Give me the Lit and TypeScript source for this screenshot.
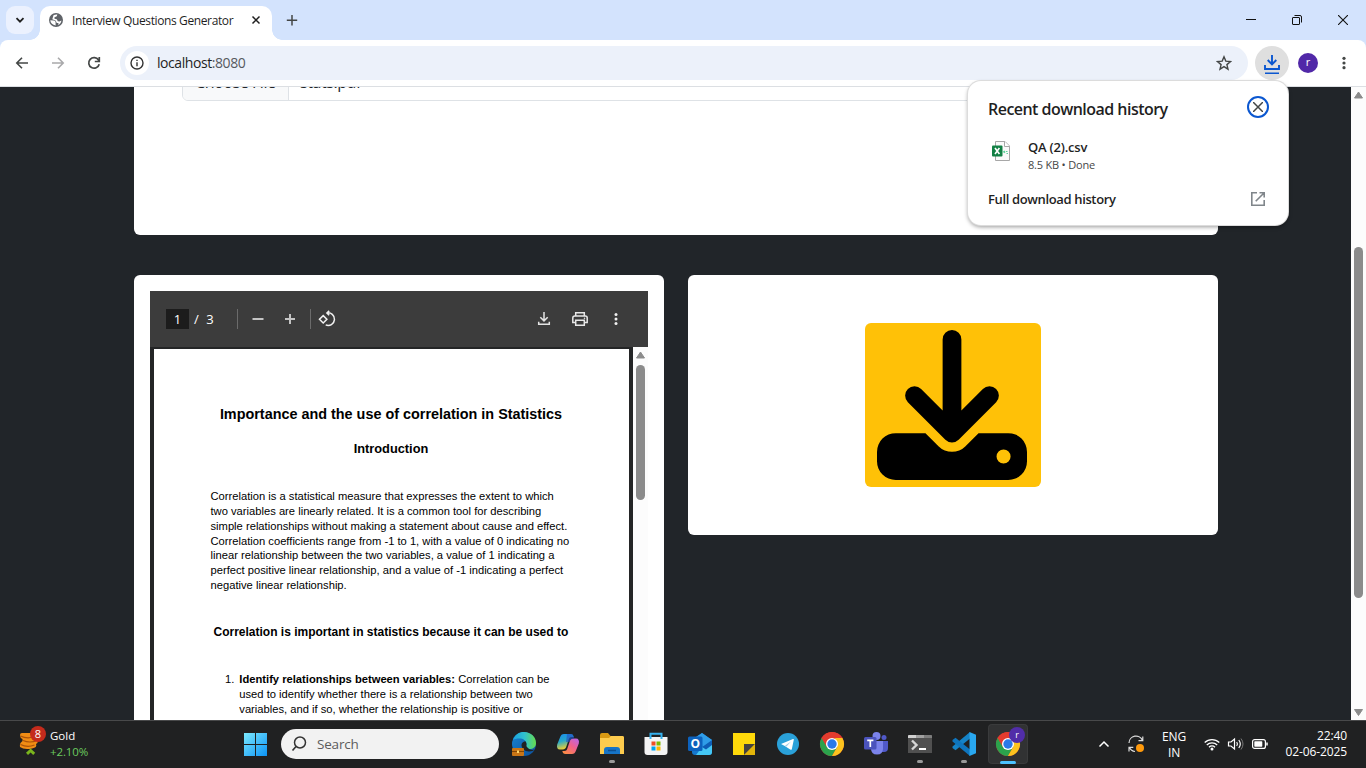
import { LitElement, html, css } from "lit";
import { customElement } from "lit/decorators.js";

const chromeLogo = html`<svg width="24" height="24" viewBox="0 0 24 24">
  <circle cx="12" cy="12" r="12" fill="#e33b2e" />
  <path d="M1.6 6 A12 12 0 0 0 12 24 L17.2 15 H12 Z" fill="#2ba24c" />
  <path d="M22.4 6 A12 12 0 0 1 12 24 L17.2 15 L15 6 Z" fill="#fcc31e" />
  <path d="M1.6 6 L6.8 15 L12 12 V6 H22.4 A12 12 0 0 0 1.6 6 Z" fill="#e33b2e" />
  <circle cx="12" cy="12" r="6" fill="#fff" />
  <circle cx="12" cy="12" r="4.7" fill="#2a79e8" />
</svg>`;

@customElement("browser-tabs")
class BrowserTabs extends LitElement {
  static styles = css`
    :host { display: flex; height: 40px; background: #d3e3fd; font-family: "Open Sans", sans-serif; }
    .search { width: 28px; height: 28px; margin: 6px 6px 0; border-radius: 9px; background: #ebf1fe; display: grid; place-items: center; }
    .tab { position: relative; width: 232px; height: 34px; margin-top: 6px; background: #fff; border-radius: 10px 10px 0 0; display: flex; align-items: center; box-sizing: border-box; padding: 0 9px 6px; }
    .tab::before, .tab::after { content: ""; position: absolute; bottom: 0; width: 10px; height: 10px; }
    .tab::before { left: -10px; background: radial-gradient(circle at 0 0, #0000 9.5px, #fff 10px); }
    .tab::after { right: -10px; background: radial-gradient(circle at 100% 0, #0000 9.5px, #fff 10px); }
    .title { margin-left: 9px; font-size: 12px; letter-spacing: -0.38px; color: #1f1f1f; white-space: nowrap; flex: 1; }
    .plus { margin: 12px 0 0 12px; }
    .window { margin-left: auto; display: flex; }
    .window div { width: 46px; height: 40px; display: grid; place-items: center; }
    svg { display: block; }
  `;
  render() {
    return html`
      <div class="search"><svg width="10" height="10" viewBox="0 0 10 10"><path d="M1.5 3.2 5 6.7 8.5 3.2" fill="none" stroke="#1f1f1f" stroke-width="1.8" /></svg></div>
      <div class="tab">
        <svg width="14" height="14" viewBox="0 0 14 14"><circle cx="7" cy="7" r="7" fill="#5f6368" /><path d="M1.300 7.300 4.500 7.500c1.200.1 2.100.9 2.100 2v2.900C3.700 12.200 1.500 10 1.300 7.300ZM8.300 1.500 7.800 3.200 5.500 4.200v1.600l2.300.4 1 2.100 1.700.2 1.900-.9C12.200 9.600 11 11.300 9.200 12L9.500 10H7.800L6.500 7.500 3.300 6.300 4.500 2.300Q6 1.300 8.300 1.500Z" fill="#fff" /></svg>
        <span class="title">Interview Questions Generator</span>
        <svg width="14" height="14" viewBox="0 0 14 14"><path d="m3.500 3.500 7 7M10.500 3.500l-7 7" stroke="#1f1f1f" stroke-width="1.500" /></svg>
      </div>
      <svg class="plus" width="16" height="16" viewBox="0 0 16 16"><path d="M8 3v10.500M2.800 8.200h10.400" stroke="#444746" stroke-width="1.500" /></svg>
      <div class="window">
        <div><svg width="10" height="10"><path d="M0 4.500h10" stroke="#111" /></svg></div>
        <div><svg width="10" height="10" viewBox="0 0 10 10"><path d="M.5 3q0-.5.5-.5h6q.5 0 .5.5v6q0 .5-.5.5H1q-.5 0-.5-.5ZM2.500 .500h5.500q1.500 0 1.500 1.500v5.500" fill="none" stroke="#111" /></svg></div>
        <div><svg width="10" height="10" viewBox="0 0 10 10"><path d="m0 0 10 10M10 0 0 10" stroke="#111" stroke-width="1.100" /></svg></div>
      </div>`;
  }
}

@customElement("browser-toolbar")
class BrowserToolbar extends LitElement {
  static styles = css`
    :host { display: block; background: #d3e3fd; height: 47px; font-family: "Open Sans", sans-serif; }
    .bar { height: 47px; box-sizing: border-box; background: #fff; border-radius: 8px 8px 0 0; border-bottom: 1px solid #dcdfe3; display: flex; align-items: center; padding: 0 3px 0 4px; }
    .btn { width: 36px; display: grid; place-items: center; }
    .omni { margin-left: 8px; width: 1128px; height: 34px; box-sizing: border-box; border-radius: 17px; background: #ecf1fa; display: flex; align-items: center; padding: 0 16px 0 5px; }
    .info { width: 24px; height: 24px; border-radius: 50%; background: #fff; display: grid; place-items: center; }
    .url { flex: 1; margin: -1px 0 0 8px; font-size: 14px; letter-spacing: -0.43px; color: #1f1f1f; }
    .port { color: #56595e; }
    .dl { margin-left: 7px; width: 34px; height: 34px; border-radius: 50%; background: #dfdfdf; display: grid; place-items: center; }
    .me { margin: 0 8px 0 9px; width: 20px; height: 20px; border-radius: 50%; background: #5128a8; color: #fff; font-size: 11px; line-height: 18px; text-align: center; }
    svg { display: block; }
  `;
  render() {
    return html`<div class="bar">
      <div class="btn"><svg width="16" height="16" viewBox="0 0 16 16"><path d="M14 8H3M8 2.800 2.800 8 8 13.200" fill="none" stroke="#444746" stroke-width="1.600" /></svg></div>
      <div class="btn"><svg width="16" height="16" viewBox="0 0 16 16"><path d="M2 8h11M8 2.800 13.200 8 8 13.200" fill="none" stroke="#a9a9ab" stroke-width="1.600" /></svg></div>
      <div class="btn"><svg width="16" height="16" viewBox="0 0 16 16"><path d="M13.200 9.200A5.300 5.300 0 1 1 12.500 5L13 5.700M13.300 2v4.500H8.800" fill="none" stroke="#444746" stroke-width="1.700" /></svg></div>
      <div class="omni">
        <div class="info"><svg width="14" height="14" viewBox="0 0 14 14"><circle cx="7" cy="7" r="6" fill="none" stroke="#333" stroke-width="1.400" /><path d="M7 6.200v4M7 3.700v1.400" stroke="#333" stroke-width="1.400" /></svg></div>
        <span class="url">localhost<span class="port">:8080</span></span>
        <svg width="16" height="16" viewBox="0 0 16 16"><path d="m8 1.800 1.800 4.300 4.700.4-3.600 3.100 1.100 4.600L8 11.700l-4 2.500 1.100-4.600L1.500 6.500l4.700-.4Z" fill="none" stroke="#444746" stroke-width="1.400" /></svg>
      </div>
      <div class="dl"><svg width="18" height="22" viewBox="0 0 18 22"><path d="M9 3v8.500M4.700 8 9 12.300 13.300 8M2 13v4h14v-4M2 21.500h14" fill="none" stroke="#0b57d0" stroke-width="1.900" /></svg></div>
      <div class="me">r</div>
      <div class="btn"><svg width="16" height="16" viewBox="0 0 16 16"><g fill="#444746"><circle cx="8" cy="3.300" r="1.600" /><circle cx="8" cy="8" r="1.600" /><circle cx="8" cy="12.700" r="1.600" /></g></svg></div>
    </div>`;
  }
}

@customElement("download-popup")
class DownloadPopup extends LitElement {
  static styles = css`
    :host { display: block; box-sizing: border-box; width: 320px; height: 144px; border-radius: 13px; background: #fff; box-shadow: 0 0 0 1px #dcdcdc, 0 2px 4px #0006; padding: 15px 19px 0 20px; font-family: "Open Sans", sans-serif; color: #1f1f1f; }
    .head, .foot, .item { display: flex; justify-content: space-between; }
    .head { height: 22px; }
    h2 { margin: 2px 0 0; font-size: 16px; line-height: 22px; font-weight: 600; letter-spacing: -0.53px; white-space: nowrap; }
    .x { width: 22px; height: 22px; box-sizing: border-box; border: 2px solid #0b57d0; border-radius: 50%; display: grid; place-items: center; }
    .item { margin-top: 19px; justify-content: flex-start; height: 36px; }
    .item > svg { margin: 4px 0 0 4px; }
    .meta { margin-left: 16px; }
    .name { font-size: 13px; line-height: 20px; font-weight: 600; letter-spacing: -0.2px; }
    .size { font-size: 11px; line-height: 15px; color: #474747; letter-spacing: -0.2px; }
    .foot { margin-top: 16px; align-items: center; font-size: 13px; line-height: 20px; font-weight: 600; letter-spacing: -0.36px; padding-right: 3px; }
    .x svg, .item svg, .foot svg { display: block; }
  `;
  render() {
    return html`
      <div class="head"><h2>Recent download history</h2><div class="x"><svg width="10" height="10"><path d="m0 0 10 10M10 0 0 10" stroke="#444746" stroke-width="1.500" /></svg></div></div>
      <div class="item">
        <svg width="20" height="20" viewBox="0 0 20 20"><path d="M3.500 .500h9.500l4.500 4.500v14.500h-14Z" fill="#fafafa" stroke="#a7a7a7" /><path d="M12.500 .500v5h5" fill="#fff" stroke="#a7a7a7" /><path d="M11.500 11.500l1.500-1.500M11.500 10l1.500 2M14 10.500h1.500M14.500 12.500h1.500" stroke="#5dd29a" stroke-width="1.200" /><rect y="4.500" width="10.500" height="11" rx="1" fill="#128044" /><path d="m3 7 4.400 6M7.400 7 3 13" stroke="#fff" stroke-width="1.600" /></svg>
        <div class="meta"><div class="name">QA (2).csv</div><div class="size">8.5 KB • Done</div></div>
      </div>
      <div class="foot"><span>Full download history</span><svg width="16" height="16" viewBox="0 0 16 16"><path d="M7 1.800H1.800v12.400h12.400V9M9.500 1.800h4.700v4.700M14 2 5.700 10.300" fill="none" stroke="#80868b" stroke-width="1.600" /></svg></div>`;
  }
}

@customElement("pdf-viewer")
class PdfViewer extends LitElement {
  static styles = css`
    :host { display: block; width: 498px; background: #242526; }
    .tools { height: 56px; box-sizing: border-box; background: #3c3c3c; display: flex; align-items: center; padding: 0 24px 0 16px; color: #fff; font: 13px "Open Sans", sans-serif; }
    .num { width: 23px; height: 20px; line-height: 20px; text-align: center; background: #1c1c1c; }
    .total { margin-left: 5px; width: 43px; word-spacing: 4px; }
    .sep { width: 1px; height: 20px; background: #6b6b6b; }
    .minus { margin-left: 12px; }
    .plus { margin: 0 12px 0 16px; }
    .rotate { margin-left: 7px; }
    .right { margin-left: auto; display: flex; gap: 20px; }
    .body { display: flex; justify-content: space-between; height: 800px; }
    .page { margin: 2px 0 0 4px; width: 475px; background: #fff; color: #000; font-family: "Liberation Sans", sans-serif; font-size: 11.2px; line-height: 14.85px; white-space: nowrap; }
    h1, h2, h3, p { margin: 0; }
    h1 { padding: 56px 1px 0 0; font-size: 14.4px; line-height: 18px; text-align: center; }
    h2 { padding: 18px 1px 0 0; font-size: 12.8px; line-height: 16px; text-align: center; }
    p { padding: 32px 0 0 56.500px; }
    h3 { padding: 31px 0 0 59.500px; font-size: 12px; line-height: 16px; }
    .list { padding: 32px 0 0 71px; display: flex; }
    .next { padding-top: 1px; }
    .bar { width: 15px; background: #fcfcfc; display: flex; flex-direction: column; align-items: center; }
    .bar svg { margin: 4px 0 6px; display: block; }
    .thumb { width: 9px; height: 135px; border-radius: 5px; background: #8b8b8b; }
    .n { width: 14.300px; }
    svg { display: block; }
  `;
  render() {
    return html`
      <div class="tools">
        <div class="num">1</div><div class="total">/ 3</div><div class="sep"></div>
        <svg class="minus" width="16" height="16"><path d="M2.500 8h11" stroke="#c4c4c4" stroke-width="2" /></svg>
        <svg class="plus" width="16" height="16"><path d="M3 8h10M8 3v10" stroke="#c4c4c4" stroke-width="2" /></svg>
        <div class="sep"></div>
        <svg class="rotate" width="18" height="18" viewBox="0 0 18 18"><path d="m5.200 5.600 3.700 3.700-3.700 3.700-3.700-3.700ZM8.700 3A6.300 6.300 0 1 1 7.700 14.900M11.200.900 8.900 3 11.200 5.300" fill="none" stroke="#f1f1f1" stroke-width="1.500" /></svg>
        <div class="right">
          <svg width="16" height="16" viewBox="0 0 16 16"><path d="M8 1v8.500M4.300 6.200 8 9.900l3.700-3.700M2.700 10.700v2.600h10.600v-2.600" fill="none" stroke="#e4e4e4" stroke-width="1.500" /></svg>
          <svg width="16" height="16" viewBox="0 0 16 16"><path d="M3.700 4.200V1.700h8.600v2.500M3.500 11.500H.800V7q0-2 2-2h10.400q2 0 2 2v4.500h-2.700M3.700 9.200h8.600v5H3.700Z" fill="none" stroke="#e8e8e8" stroke-width="1.500" /><circle cx="12.500" cy="7.200" r=".8" fill="#e8e8e8" /></svg>
          <svg width="16" height="16" viewBox="0 0 16 16"><g fill="#f1f1f1"><circle cx="8" cy="3.500" r="1.500" /><circle cx="8" cy="8" r="1.500" /><circle cx="8" cy="12.500" r="1.500" /></g></svg>
        </div>
      </div>
      <div class="body">
        <div class="page">
          <h1>Importance and the use of correlation in Statistics</h1>
          <h2>Introduction</h2>
          <p>Correlation is a statistical measure that expresses the extent to which<br />two variables are linearly related. It is a common tool for describing<br />simple relationships without making a statement about cause and effect.<br />Correlation coefficients range from -1 to 1, with a value of 0 indicating no<br />linear relationship between the two variables, a value of 1 indicating a<br />perfect positive linear relationship, and a value of -1 indicating a perfect<br />negative linear relationship.</p>
          <h3>Correlation is important in statistics because it can be used to</h3>
          <div class="list"><span class="n">1.</span><div><b>Identify relationships between variables:</b> Correlation can be<br />used to identify whether there is a relationship between two<br />variables, and if so, whether the relationship is positive or<div class="next">negative. This information can be useful for making predictions</div></div></div>
        </div>
        <div class="bar"><svg width="9" height="8"><path d="M4.500 1 8.500 7h-8Z" fill="#8b8b8b" stroke="#8b8b8b" stroke-linejoin="round" /></svg><div class="thumb"></div></div>
      </div>`;
  }
}

@customElement("task-bar")
class TaskBar extends LitElement {
  static styles = css`
    :host { display: flex; height: 48px; box-sizing: border-box; border-top: 1px solid #48494a; background: #202122; color: #fff; font: 12px "Open Sans", sans-serif; align-items: center; padding-bottom: 1px; }
    svg { display: block; overflow: visible; }
    .widget { width: 233px; display: flex; box-sizing: border-box; padding-left: 18px; }
    .coins { margin-top: -2px; }
    .quote { margin-left: 4px; line-height: 16px; font-size: 11.500px; }
    .up { color: #6ccb5f; letter-spacing: -0.1px; }
    .cell { position: relative; width: 44px; height: 40px; display: grid; place-items: center; }
    .start svg { margin-left: 1px; }
    .active::before { content: ""; position: absolute; inset: 0 2px; border-radius: 4px; background: #ffffff14; box-shadow: inset 0 0 0 1px #ffffff0c; }
    .active svg { position: relative; }
    .run::after { content: ""; position: absolute; bottom: 1px; left: 19px; width: 6px; height: 3px; border-radius: 2px; background: #9a9a9a; }
    .active::after { content: ""; position: absolute; bottom: 0; left: 14px; width: 16px; height: 3px; border-radius: 2px; background: #4cc2ff; }
    .badge { position: absolute; left: 23px; top: 3px; width: 16px; height: 16px; border-radius: 50%; background: #512da8; font-size: 9px; line-height: 15px; text-align: center; }
    .search { margin: 0 3px 0 4px; width: 218px; height: 30px; box-sizing: border-box; border-radius: 15px; background: #f2f2f2; color: #5c5c5c; display: flex; align-items: center; gap: 10px; padding-left: 10px; font-size: 13.500px; letter-spacing: -0.200px; }
    .search span { margin-top: -1px; }
    .tray { margin-left: auto; padding-right: 19px; display: flex; align-items: center; }
    .ic { width: 32px; display: grid; place-items: center; }
    .lang { width: 44px; text-align: center; line-height: 16px; margin-top: 2px; letter-spacing: -0.2px; }
    .snd { width: 16px; }
    .clock { width: 71px; display: flex; flex-direction: column; align-items: flex-end; line-height: 16px; font-size: 12px; letter-spacing: -0.1px; white-space: nowrap; margin-top: -1px; }
  `;
  render() {
    return html`
      <div class="widget">
        <svg class="coins" width="28" height="32" viewBox="0 0 28 32">
          <path d="M2 9q0-2 2-2h12v4.500q4 0 4 2.500 0 3-2 4 1.500 3.500-4 4.500-8 1.500-12-1.500-.500-2 .500-4l2-2V13q-2.500-1-2.500-4Z" fill="#f08c14" />
          <path d="M2.500 10q6 3 13 1M5 14.500q7 3 14 0M2.500 18.500q7 3.500 14 .5" stroke="#a9520a" stroke-width="1.200" fill="none" />
          <path d="m9 27.800 3.600-3.300 3.600 3.300" fill="none" stroke="#7ab51d" stroke-width="3" />
          <circle cx="20" cy="8" r="8" fill="#c42b1c" />
          <text x="20" y="12" text-anchor="middle" fill="#fff" font-size="11">8</text>
        </svg>
        <div class="quote"><div>Gold</div><div class="up">+2.10%</div></div>
      </div>
      <div class="cell start"><svg width="23" height="23" viewBox="0 0 23 23"><defs><linearGradient id="win" gradientUnits="userSpaceOnUse" x1="0" y1="0" x2="23" y2="23"><stop stop-color="#7be9ff" /><stop offset="1" stop-color="#0c93f5" /></linearGradient></defs><path d="M0 0h11v11H0ZM12 0h11v11H12ZM0 12h11v11H0ZM12 12h11v11H12Z" fill="url(#win)" /></svg></div>
      <div class="search"><svg width="16" height="16" viewBox="0 0 16 16"><circle cx="9" cy="6.500" r="5.500" fill="none" stroke="#333" stroke-width="1.500" /><path d="m5 10.500-3.500 4" stroke="#333" stroke-width="1.700" /></svg><span>Search</span></div>

      <div class="cell"><svg width="24" height="24" viewBox="0 0 24 24"><defs><linearGradient id="e1" x1="0" x2="1"><stop stop-color="#1aa3e0" /><stop offset=".5" stop-color="#30c1cd" /><stop offset="1" stop-color="#67dc4b" /></linearGradient><linearGradient id="e2" x2="1" y2="1"><stop stop-color="#1784d4" /><stop offset="1" stop-color="#0d4f99" /></linearGradient></defs><circle cx="12" cy="12" r="12" fill="url(#e2)" /><path d="M1 8C3 2.500 7 0 12 0c7 0 12 5 12 11 0 4-3 6-6.500 6-2.500 0-4-.8-4-1.700 0-.6 1-1.200 1-3C14.500 8.500 11 6.500 7.500 6.500 4.500 6.500 2.500 7 1 8Z" fill="url(#e1)" /><path d="M15 15c-1-1-.5-1.500-.5-3 0-1-.5-2-1.300-2.700-2 .2-3.500 1.700-3.700 3.700 0 3.500 3 6.500 7.500 6.500 2.500 0 4.500-.8 5.700-2-2 1-5.700.5-7.700-2.500Z" fill="#202122" /><rect y="16" width="12" height="8" rx="1" fill="#c97516" /><path d="M0 19.500h12" stroke="#804506" /><rect x="5" y="18.500" width="2" height="2.500" fill="#ffd76a" /></svg></div>
      <div class="cell"><svg width="24" height="24" viewBox="0 0 24 24"><defs><linearGradient id="c1" x2=".3" y2="1"><stop stop-color="#1a8cf0" /><stop offset=".5" stop-color="#27a9c9" /><stop offset="1" stop-color="#f0cf32" /></linearGradient><linearGradient id="c2" x1="1" x2=".2" y2="1"><stop stop-color="#b565f0" /><stop offset=".5" stop-color="#f0608c" /><stop offset="1" stop-color="#fc8b45" /></linearGradient></defs><path d="M8 2h6.500c2 0 2.700 1 3.200 3h-2c-2 0-2.700 1-3.200 3L10.500 14c-.6 2.200-1.500 3.500-4 3.500H4C1.500 17.500.500 15.500 1.200 12.500L4 5.500C4.800 3 6 2 8 2Z" fill="url(#c1)" /><path d="M16 22H9.500c-2 0-2.700-1-3.200-3h2c2 0 2.700-1 3.200-3L13.500 10c.6-2.200 1.500-3.500 4-3.500H20c2.500 0 3.500 2 2.800 5L20 18.500C19.200 21 18 22 16 22Z" fill="url(#c2)" /><path d="M11 2h4c1.700 0 2.300 1 2.700 3l.5 1.500c-3 0-4 1-4.700 3.500H10Z" fill="#2451c5" opacity=".65" /></svg></div>
      <div class="cell run"><svg width="24" height="24" viewBox="0 0 24 24"><path d="M0 3q0-2 2-2h6l2.500 3H22q2 0 2 2v4H0Z" fill="#d99a13" /><path d="M0 6h9l2-2h11.500q1.500 0 1.500 1.500V22H0Z" fill="#fdcc4e" /><path d="M4 22v-4q0-3 3-3h10q3 0 3 3v4Z" fill="#1674c7" /><path d="M8 18.500h8" stroke="#0c4f91" stroke-width="1.500" /></svg></div>
      <div class="cell"><svg width="24" height="24" viewBox="0 0 24 24"><path d="M6.500 6V1.700h11V6" fill="none" stroke="#35b1ee" stroke-width="2" /><path d="M.5 5h23v15q0 3-3 3h-17q-3 0-3-3Z" fill="#f4f4f4" /><path d="M6.500 5v2M17.500 5v2" stroke="#35b1ee" stroke-width="2" /><path d="M7.500 9.500h4v4h-4Z" fill="#f04f24" /><path d="M12.500 9.500h4v4h-4Z" fill="#7eb900" /><path d="M7.500 14.500h4v4h-4Z" fill="#00a3ee" /><path d="M12.500 14.500h4v4h-4Z" fill="#feb800" /></svg></div>
      <div class="cell"><svg width="24" height="24" viewBox="0 0 24 24"><path d="m4 8 10-7 10 7v12q0 3-3 3H7q-3 0-3-3Z" fill="#1577cd" /><path d="m8 5 6-4 10 7-9 7Z" fill="#2f9de8" /><path d="m14 15 10-7v12q0 3-3 3H8Z" fill="#45c8f5" /><path d="m24 8-10 7 4 2.500 6-4.500Z" fill="#0e5db5" /><rect y="4.500" width="14.500" height="14.500" rx="1.500" fill="#0d62bd" /><text x="7.250" y="16" text-anchor="middle" font-size="12" font-weight="700" fill="#fff">O</text></svg></div>
      <div class="cell"><svg width="24" height="24" viewBox="0 0 24 24"><path d="M1 1h22v11l-11 11H1Z" fill="#ffd90a" /><path d="M12 12h11L12 23Z" fill="#45433f" /><path d="M23 12v11H12Z" fill="#e3b50a" /></svg></div>
      <div class="cell"><svg width="24" height="24" viewBox="0 0 24 24"><circle cx="12" cy="12" r="11" fill="#2aa1d9" /><path d="m5 12 12-5q1-.3.800.700l-2 9.500q-.3 1-1.200.500L8.800 14Z" fill="#fff" /><path d="m9 13.700 6-4.200-4.500 5Z" fill="#9fcce6" /></svg></div>
      <div class="cell">${chromeLogo}</div>
      <div class="cell"><svg width="24" height="24" viewBox="0 0 24 24"><circle cx="20" cy="5.500" r="2.500" fill="#5059c9" /><path d="M17 9h7v7q0 4-4 4h-3Z" fill="#5059c9" /><circle cx="12.500" cy="4" r="4" fill="#7b83eb" /><path d="M7 9h12v7.500q0 6-6 6t-6-6Z" fill="#7b83eb" /><rect y="5" width="12.500" height="12.500" rx="1.500" fill="#4b53bc" /><path d="M3.200 8.400h6.200M6.300 8.400v6.600" stroke="#fff" stroke-width="1.700" /></svg></div>
      <div class="cell run"><svg width="24" height="24" viewBox="0 0 24 24"><path d="M0 4q0-1 1-1h22q1 0 1 1v17H0Z" fill="#505050" /><path d="M0 6V4q0-1 1-1h7v3Z" fill="#d0d0d0" /><path d="M8 3h8v3H8Z" fill="#a0a0a0" /><path d="M16 3h7q1 0 1 1v2h-8Z" fill="#7d7d7d" /><path d="m4 8.500 4.500 4.500L4 17.500" fill="none" stroke="#d7d7d7" stroke-width="2.400" /><path d="M11 17h7" stroke="#fff" stroke-width="2" /></svg></div>
      <div class="cell run"><svg width="24" height="24" viewBox="0 0 24 24"><path d="M18 0v6.500L3.500 18.200.5 16v-1.500Z" fill="#1583c7" /><path d="M.5 8 3.500 5.800 18 17.500V24L.5 9.500Z" fill="#0f75bd" /><path d="m17.500 0 6.500 2.800v18.400L17.500 24Z" fill="#29a8f0" /></svg></div>
      <div class="cell active">${chromeLogo}<div class="badge">r</div></div>

      <div class="tray">
        <div class="ic"><svg width="12" height="8"><path d="m1.500 6.500 4.500-4.500 4.500 4.500" fill="none" stroke="#fff" stroke-width="1.500" /></svg></div>
        <div class="ic"><svg width="18" height="18" viewBox="0 0 18 18"><path d="M2 8A7 7 0 0 1 15.500 5.500M15.800 1.500v4.200h-4.300M2.500 12.500A7 7 0 0 0 8 16.500M2 16.500v-4.200h4.300" fill="none" stroke="#ddd" stroke-width="1.200" /><circle cx="13" cy="13" r="4" fill="#ff9a0c" /></svg></div>
        <div class="lang">ENG<br />IN</div>
        <div class="ic"><svg width="16" height="13" viewBox="0 0 16 13"><path d="M.700 4.500a10.500 10.500 0 0 1 14.600 0M2.800 7a7.400 7.400 0 0 1 10.400 0M5 9.200a4.300 4.300 0 0 1 6 0" fill="none" stroke="#fff" stroke-width="1.300" /><circle cx="8" cy="11" r="1.500" fill="#fff" /></svg></div>
        <div class="snd"><svg width="16" height="14" viewBox="0 0 16 14"><path d="M.500 5v4h2.500l3.500 3V2L3 5Z" fill="none" stroke="#fff" stroke-width="1.200" /><path d="M8.700 5q1.500 2 0 4M10.800 3q3 4 0 8" fill="none" stroke="#fff" stroke-width="1.200" /><path d="M13 1.500q4 5.500 0 11" fill="none" stroke="#777" /></svg></div>
        <div class="ic"><svg width="16" height="10" viewBox="0 0 16 10"><rect x=".6" y=".6" width="12.800" height="8.800" rx="2" fill="none" stroke="#fff" stroke-width="1.200" /><rect x="2.300" y="2.300" width="8" height="5.400" rx=".6" fill="#fff" /><path d="M15 3.500v3" stroke="#fff" stroke-width="1.500" /></svg></div>
        <div class="clock"><span>22:40</span><span>02-06-2025</span></div>
      </div>`;
  }
}

@customElement("app-root")
class AppRoot extends LitElement {
  static styles = css`
    :host { display: flex; flex-direction: column; width: 1366px; height: 768px; position: relative; overflow: hidden; }
    .view { flex: 1; min-height: 0; display: flex; background: #212529; overflow: hidden; }
    .content { flex: 1; padding: 0 133px 0 134px; overflow: hidden; height: 633px; }
    .upload { margin-top: -40px; height: 188px; box-sizing: border-box; background: #fff; border-radius: 6px; padding: 16px 48px; }
    .file { height: 38px; box-sizing: border-box; border: 1px solid #dee2e6; border-radius: 6px; display: flex; overflow: hidden; font: 16px/36px "Open Sans", sans-serif; letter-spacing: -0.42px; color: #212529; }
    .choose { width: 106px; box-sizing: border-box; background: #f8f9fa; border-right: 1px solid #dee2e6; padding-left: 12px; white-space: nowrap; }
    .name { padding-left: 11px; }
    .row { display: flex; align-items: flex-start; gap: 24px; margin-top: 40px; }
    .card { width: 530px; box-sizing: border-box; background: #fff; border-radius: 6px; padding: 16px; }
    .save { height: 260px; display: grid; place-items: center; }
    .warn { width: 176px; height: 164px; border-radius: 6px; background: #ffc107; display: grid; place-items: center; box-sizing: border-box; padding-right: 2px; }
    .scroll { width: 15px; background: #fcfcfc; display: flex; flex-direction: column; align-items: center; justify-content: space-between; padding: 3px 0 4px; box-sizing: border-box; }
    .thumb { width: 9px; height: 351px; margin-top: 37px; border-radius: 5px; background: #8b8b8b; }
    download-popup { position: absolute; left: 968px; top: 81px; }
    svg { display: block; }
  `;
  render() {
    return html`
      <browser-tabs></browser-tabs>
      <browser-toolbar></browser-toolbar>
      <div class="view">
        <div class="content">
          <div class="upload"><div class="file"><div class="choose">Choose File</div><div class="name">stats.pdf</div></div></div>
          <div class="row">
            <div class="card"><pdf-viewer></pdf-viewer></div>
            <div class="card save"><div class="warn">
              <svg width="150" height="150" viewBox="0 0 16 16"><path d="M8 1v10M4 7l4 4 4-4" fill="none" stroke="#000" stroke-width="2" stroke-linecap="round" stroke-linejoin="round" /><path fill-rule="evenodd" d="M2 11h3.172l1.414 1.414a2 2 0 0 0 2.828 0L10.828 11H14a2 2 0 0 1 2 2v1a2 2 0 0 1-2 2H2a2 2 0 0 1-2-2v-1a2 2 0 0 1 2-2Zm11.500 3.250a.75.75 0 1 0 0-1.500.75.75 0 0 0 0 1.500Z" /></svg>
            </div></div>
          </div>
        </div>
        <div class="scroll">
          <svg width="9" height="9"><path d="M4.500 2 8.500 8h-8Z" fill="#8b8b8b" stroke="#8b8b8b" stroke-linejoin="round" /></svg>
          <div class="thumb"></div>
          <svg width="9" height="7"><path d="M4.500 6.500 8.500 .500h-8Z" fill="#8b8b8b" stroke="#8b8b8b" stroke-linejoin="round" /></svg>
        </div>
      </div>
      <task-bar></task-bar>
      <download-popup></download-popup>`;
  }
}
